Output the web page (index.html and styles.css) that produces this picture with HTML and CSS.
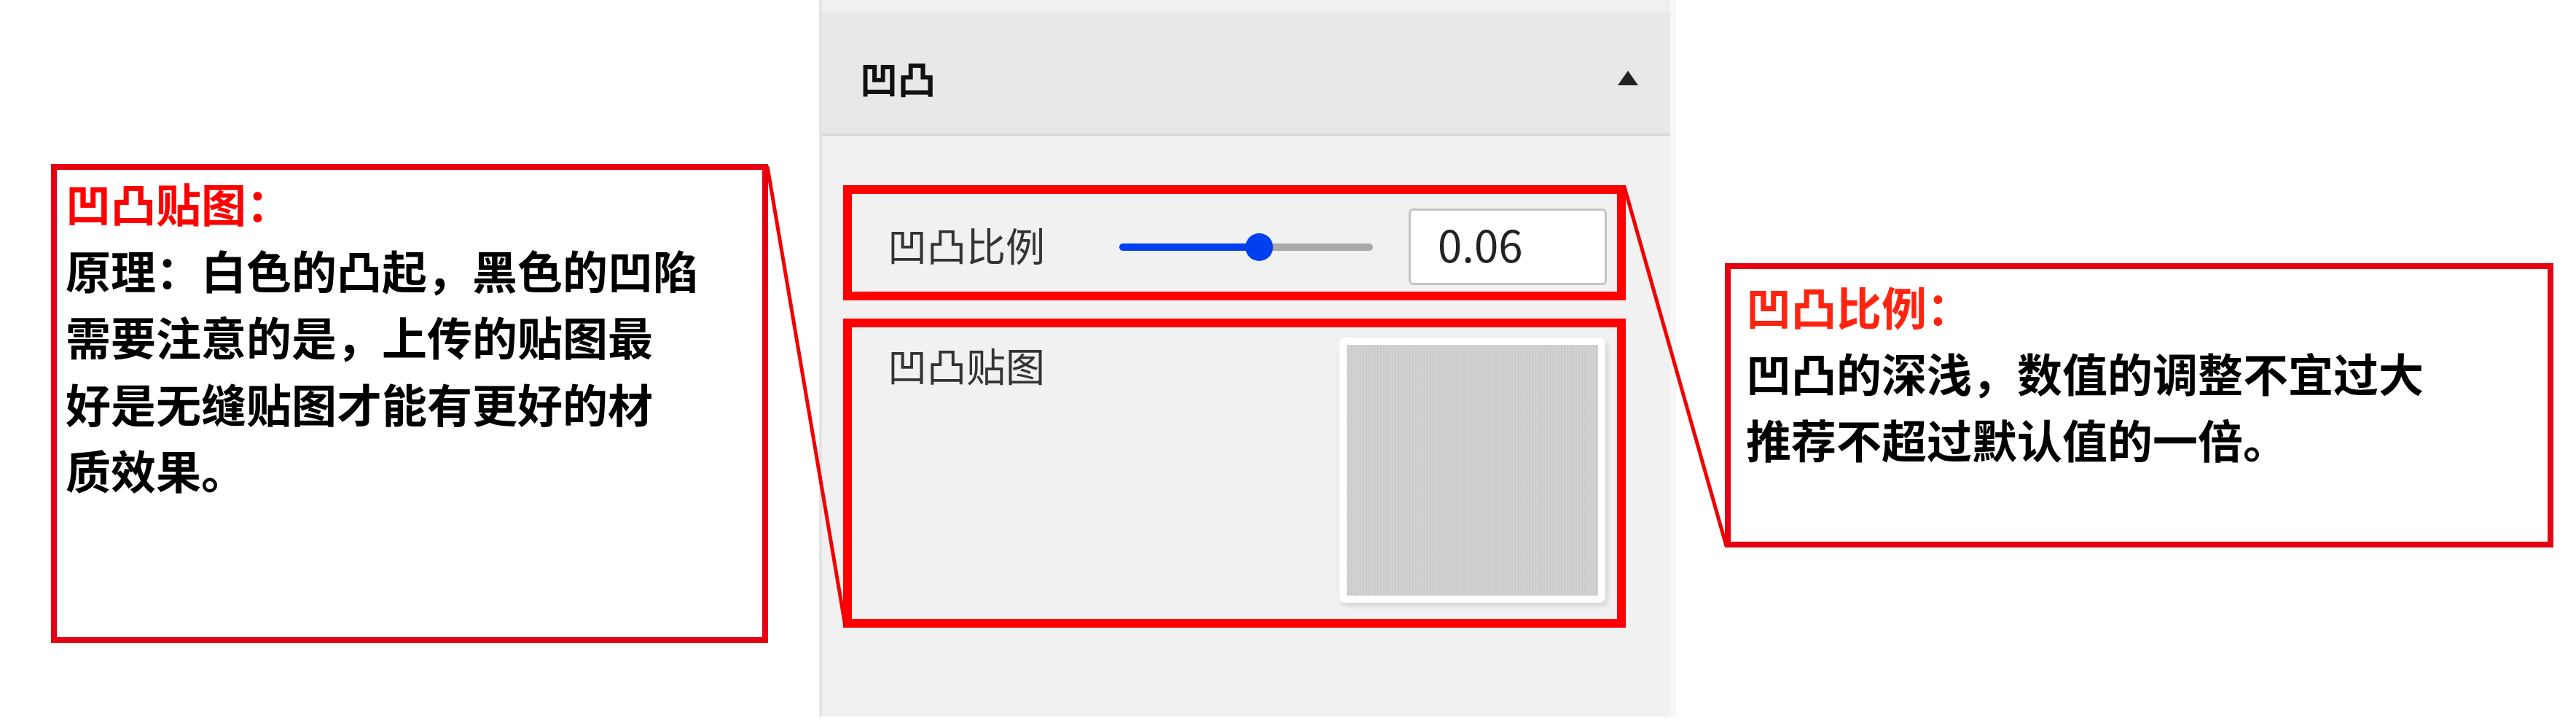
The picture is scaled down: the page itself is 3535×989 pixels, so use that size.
FILE: index.html
```html
<!DOCTYPE html>
<html lang="zh-CN">
<head>
    <meta charset="UTF-8">
    <meta name="viewport" content="width=device-width, initial-scale=1.0">
    <title>凹凸 - 材质说明</title>
    <link rel="stylesheet" href="styles.css">
</head>
<body>

    <div class="stage">
        <!-- 左侧说明 -->
        <div class="side side-left">
            <div class="note note-left">
                <div class="note-title">凹凸贴图：</div>
                原理：白色的凸起，黑色的凹陷<br>
                需要注意的是，上传的贴图最<br>
                好是无缝贴图才能有更好的材<br>
                质效果。
            </div>
        </div>

        <!-- 属性面板 -->
        <div class="panel">
            <div class="panel-top"></div>
            <div class="panel-head">
                <span class="panel-title">凹凸</span>
                <span class="caret"></span>
            </div>
            <div class="panel-body">
                <div class="row row-scale">
                    <span class="row-label">凹凸比例</span>
                    <div class="slider">
                        <div class="slider-fill"></div>
                        <div class="slider-thumb"></div>
                    </div>
                    <div class="value"><span>0.06</span></div>
                </div>
                <div class="row row-map">
                    <span class="row-label map-label">凹凸贴图</span>
                    <div class="map-card">
                        <div class="map-img"></div>
                    </div>
                </div>
            </div>
        </div>

        <!-- 右侧说明 -->
        <div class="side side-right">
            <div class="note note-right">
                <div class="note-title note-title-alt">凹凸比例：</div>
                凹凸的深浅，数值的调整不宜过大<br>
                推荐不超过默认值的一倍。
            </div>
        </div>
    </div>

    <!-- 引线 -->
    <svg class="leaders" width="3535" height="989" viewBox="0 0 3535 989">
        <line x1="1053" y1="228" x2="1160" y2="859" stroke="#f00000" stroke-width="5"/>
        <line x1="2229" y1="256" x2="2369" y2="749" stroke="#f00000" stroke-width="5"/>
    </svg>

</body>
</html>
```

FILE: styles.css
```css
body {
    margin: 0;
    width: 3535px;
    height: 989px;
    overflow: hidden;
    background-color: #ffffff;
    font-family: "Noto Sans CJK SC", "Noto Sans", sans-serif;
    color: #000;
    position: relative;
}
.stage {
    display: flex;
    height: 989px;
}

/* annotation boxes */
.side {
    flex: none;
    box-sizing: border-box;
}
.side-left {
    width: 1124px;
    padding: 225px 0 0 70px;
}
.side-right {
    flex: 1;
    padding: 361px 0 0 67px;
}
.note {
    border: 8px solid #e60012;
    box-sizing: border-box;
    font-size: 62px;
    font-weight: 700;
    line-height: 91.5px;
    background-color: #fff;
}
.note-left {
    width: 984px;
    height: 657px;
    padding: 0 0 0 12px;
}
.note-right {
    width: 1137px;
    height: 390px;
    padding: 6px 0 0 21px;
    line-height: 91px;
}
.note-title {
    color: #ff0000;
}
.note-title-alt {
    color: #ff2410;
}

/* panel */
.panel {
    flex: none;
    width: 1176px;
    height: 983px;
    box-sizing: border-box;
    background-color: #f0f1f0;
    border-left: 4px solid #e3e4e3;
    border-right: 8px solid #f6f7f6;
}
.panel-top {
    height: 17px;
    background-color: #eff0ef;
}
.panel-head {
    height: 170px;
    box-sizing: border-box;
    background-color: #e8e8e8;
    border-bottom: 4px solid #d9dad9;
    display: flex;
    align-items: center;
    justify-content: space-between;
    padding: 14px 44px 0 52px;
}
.panel-title {
    font-size: 52px;
    font-weight: 700;
    line-height: 60px;
    color: #111;
}
.caret {
    width: 0;
    height: 0;
    border-left: 14px solid transparent;
    border-right: 14px solid transparent;
    border-bottom: 20px solid #222;
}
.panel-body {
    padding: 67px 61px 0 29px;
}
.row {
    border: 12px solid #ff0000;
    box-sizing: border-box;
}
.row-label {
    flex: none;
    font-size: 54px;
    line-height: 60px;
    color: #333;
}
.row-scale {
    height: 158px;
    display: flex;
    align-items: center;
    padding: 20px 14px 9px 49px;
}
.row-scale .row-label {
    width: 318px;
    margin-top: -6px;
}
.slider {
    flex: none;
    position: relative;
    width: 348px;
    height: 10px;
    margin-right: 49px;
    border-radius: 5px;
    background-color: #a9a9a9;
}
.slider-fill {
    width: 192px;
    height: 100%;
    border-radius: 5px;
    background-color: #0040ef;
}
.slider-thumb {
    position: absolute;
    left: 173px;
    top: -14px;
    width: 38px;
    height: 38px;
    border-radius: 50%;
    background-color: #0040ef;
}
.value {
    flex: none;
    width: 272px;
    height: 105px;
    box-sizing: border-box;
    border: 3px solid #c4c4c4;
    border-radius: 6px;
    background-color: #fff;
    padding: 0 0 9px 37px;
    display: flex;
    align-items: center;
    font-size: 60px;
    line-height: 90px;
    color: #222;
}
.row-map {
    height: 424px;
    margin-top: 25px;
    display: flex;
    justify-content: space-between;
    align-items: flex-start;
    padding: 14px 16px 0 49px;
}
.map-label {
    margin-top: 8px;
}
.map-card {
    width: 365px;
    height: 364px;
    box-sizing: border-box;
    padding: 10px;
    border-radius: 8px;
    background-color: #fff;
    box-shadow: 3px 4px 7px rgba(0,0,0,0.13);
}
.map-img {
    width: 100%;
    height: 100%;
    background-color: #d1d1d1;
    background-image: repeating-linear-gradient(90deg, rgba(255,255,255,0.05) 0 2px, rgba(0,0,0,0.03) 2px 4px);
}

.leaders {
    position: absolute;
    top: 0;
    left: 0;
    pointer-events: none;
}
```
